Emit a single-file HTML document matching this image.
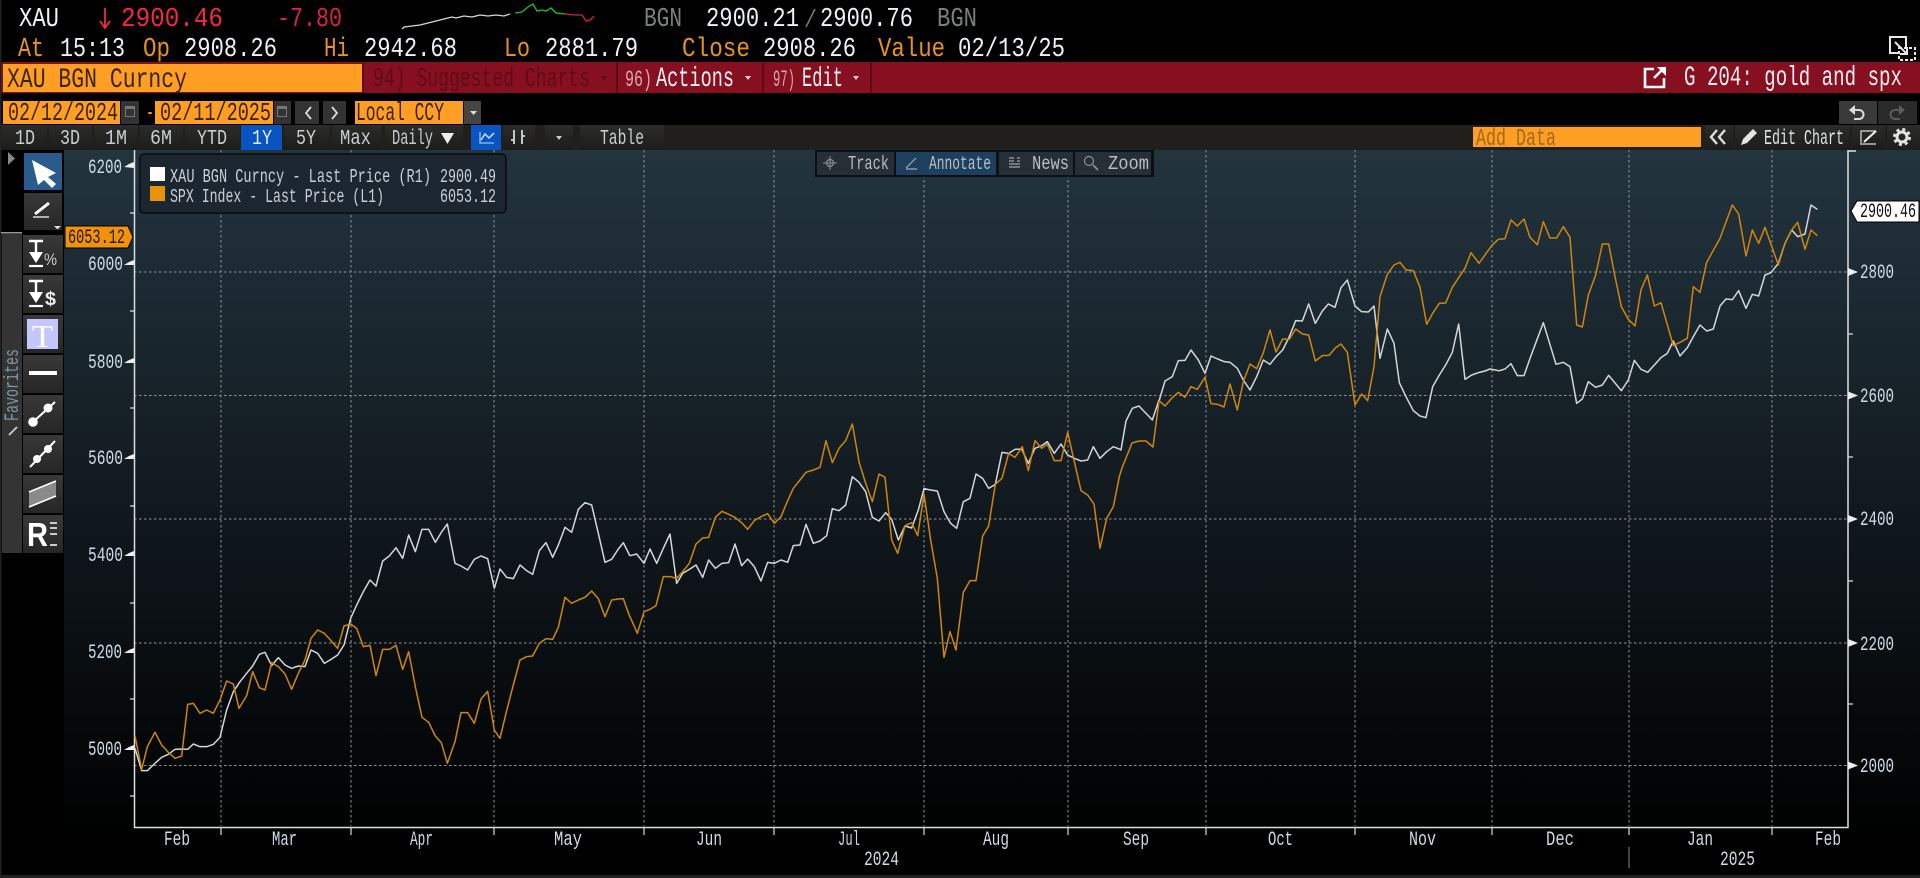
<!DOCTYPE html>
<html><head><meta charset="utf-8"><title>XAU BGN Curncy</title>
<style>
html,body{margin:0;padding:0;background:#000;width:1920px;height:878px;overflow:hidden}
svg{display:block;position:absolute;left:0;top:0;filter:blur(.3px)}
text{font-family:"Liberation Mono","DejaVu Sans Mono",monospace;white-space:pre}
.w{fill:#eef2f6}.o{fill:#e8931c}.l{fill:#cfdbe6;font-size:20px}.t{fill:#c9cdd0;font-size:21.500px}.b{fill:#b8bec4;font-size:19px}
.g{stroke:#8f9498;stroke-width:1;stroke-dasharray:2.5 2.5;fill:none}
.ws{fill:none;stroke:#d3d7da;stroke-width:4.5;stroke-linejoin:round}
.os{fill:none;stroke:#cf860c;stroke-width:4.5;stroke-linejoin:round}
</style></head><body>
<svg width="1920" height="878" viewBox="0 0 1920 878" xmlns="http://www.w3.org/2000/svg">
<defs>
<linearGradient id="bg" x1="0" y1="0" x2="0" y2="1"><stop offset="0" stop-color="#23343f"/><stop offset=".95" stop-color="#000"/><stop offset="1" stop-color="#000"/></linearGradient>
<linearGradient id="bt" x1="0" y1="0" x2="0" y2="1"><stop offset="0" stop-color="#2c2c2b"/><stop offset="1" stop-color="#1b1b1a"/></linearGradient>
<linearGradient id="tb" x1="0" y1="0" x2="0" y2="1"><stop offset="0" stop-color="#383838"/><stop offset="1" stop-color="#262626"/></linearGradient>
</defs>
<rect width="1920" height="878" fill="#000"/>

<!-- quote rows -->
<text class="w" x="19" y="26" font-size="27" textLength="40" lengthAdjust="spacingAndGlyphs">XAU</text>
<path d="M105 8V27M100 21L105 28L110 21" fill="none" stroke="#f5293f" stroke-width="1.8"/>
<text x="121" y="26" font-size="27" fill="#f5293f" textLength="102" lengthAdjust="spacingAndGlyphs">2900.46</text>
<text x="277" y="26" font-size="27" fill="#d9263a" textLength="65" lengthAdjust="spacingAndGlyphs">-7.80</text>
<polyline points="402,29 404,27 412,26 420,25 428,23 436,21 444,19 452,17 456,18 464,16 472,17 480,15 488,16 496,15 504,16 510,14" fill="none" stroke="#d8d8d8" stroke-width="1.3"/>
<polyline points="515,13 522,12 528,7 533,4 537,11 542,10 546,11 551,8 556,13 565,14" fill="none" stroke="#19c51f" stroke-width="1.3"/>
<polyline points="565,14 575,15 582,15 586,21 590,20 594,16" fill="none" stroke="#d8202c" stroke-width="1.3"/>
<text x="644" y="26" font-size="27" fill="#7c7f80" textLength="38" lengthAdjust="spacingAndGlyphs">BGN</text>
<text class="w" x="706" y="26" font-size="27" textLength="93" lengthAdjust="spacingAndGlyphs">2900.21</text>
<path d="M806 27L815 9" stroke="#777" stroke-width="1.6"/>
<text class="w" x="820" y="26" font-size="27" textLength="93" lengthAdjust="spacingAndGlyphs">2900.76</text>
<text x="937" y="26" font-size="27" fill="#7c7f80" textLength="40" lengthAdjust="spacingAndGlyphs">BGN</text>

<text class="o" x="18" y="56" font-size="27" textLength="26" lengthAdjust="spacingAndGlyphs">At</text>
<text class="w" x="60" y="56" font-size="27" textLength="65" lengthAdjust="spacingAndGlyphs">15:13</text>
<text class="o" x="143" y="56" font-size="27" textLength="27" lengthAdjust="spacingAndGlyphs">Op</text>
<text class="w" x="184" y="56" font-size="27" textLength="93" lengthAdjust="spacingAndGlyphs">2908.26</text>
<text class="o" x="324" y="56" font-size="27" textLength="25" lengthAdjust="spacingAndGlyphs">Hi</text>
<text class="w" x="364" y="56" font-size="27" textLength="93" lengthAdjust="spacingAndGlyphs">2942.68</text>
<text class="o" x="504" y="56" font-size="27" textLength="26" lengthAdjust="spacingAndGlyphs">Lo</text>
<text class="w" x="545" y="56" font-size="27" textLength="93" lengthAdjust="spacingAndGlyphs">2881.79</text>
<text class="o" x="682" y="56" font-size="27" textLength="68" lengthAdjust="spacingAndGlyphs">Close</text>
<text class="w" x="763" y="56" font-size="27" textLength="93" lengthAdjust="spacingAndGlyphs">2908.26</text>
<text class="o" x="878" y="56" font-size="27" textLength="67" lengthAdjust="spacingAndGlyphs">Value</text>
<text class="w" x="958" y="56" font-size="27" textLength="107" lengthAdjust="spacingAndGlyphs">02/13/25</text>
<!-- window icon -->
<rect x="1890" y="37" width="16" height="16" fill="none" stroke="#e8e8e8" stroke-width="2"/>
<rect x="1899" y="48" width="16" height="12" fill="#000" stroke="#e8e8e8" stroke-width="2" stroke-dasharray="3 2"/>
<path d="M1895 42L1907 54M1907 47V54H1900" fill="none" stroke="#e8e8e8" stroke-width="2"/>

<!-- red bar -->
<rect x="0" y="62" width="1920" height="31" fill="#860f20"/>
<rect x="3" y="64" width="359" height="28" fill="#ff9e24"/>
<text x="7" y="87" font-size="28" fill="#3a2400" textLength="180" lengthAdjust="spacingAndGlyphs">XAU BGN Curncy</text>
<rect x="616" y="62" width="2" height="31" fill="#5e0a16"/><rect x="762" y="62" width="2" height="31" fill="#5e0a16"/><rect x="870" y="62" width="2" height="31" fill="#5e0a16"/><rect x="362" y="62" width="2" height="31" fill="#5e0a16"/>
<text x="373" y="86" font-size="27" fill="#5f0c18" textLength="217" lengthAdjust="spacingAndGlyphs">94) Suggested Charts</text>
<path d="M601 76h6l-3 4z" fill="#5f0c18"/>
<text x="625" y="86" font-size="23" fill="#d8a8ae" textLength="27" lengthAdjust="spacingAndGlyphs">96)</text>
<text x="656" y="86" font-size="28" fill="#f6eef0" textLength="78" lengthAdjust="spacingAndGlyphs">Actions</text>
<path d="M745 76h6l-3 4z" fill="#e6d0d4"/>
<text x="773" y="86" font-size="23" fill="#d8a8ae" textLength="22" lengthAdjust="spacingAndGlyphs">97)</text>
<text x="802" y="86" font-size="28" fill="#f6eef0" textLength="41" lengthAdjust="spacingAndGlyphs">Edit</text>
<path d="M853 76h6l-3 4z" fill="#e6d0d4"/>
<path d="M1654 69H1645V87H1664V78" fill="none" stroke="#fff" stroke-width="2.6"/>
<path d="M1654 78L1662 70" stroke="#fff" stroke-width="2.6"/><path d="M1657 67H1666V76Z" fill="#fff"/>
<text x="1684" y="85" font-size="28" fill="#f6eef0" textLength="218" lengthAdjust="spacingAndGlyphs">G 204: gold and spx</text>

<!-- date row -->
<rect x="3" y="101" width="117" height="23" fill="#ff9e24"/>
<text x="8" y="120" font-size="26" fill="#3a2400" textLength="110" lengthAdjust="spacingAndGlyphs">02/12/2024</text>
<rect x="121" y="101" width="18" height="23" fill="#333"/>
<rect x="125" y="106" width="10" height="11" fill="#777"/><rect x="126" y="109" width="8" height="7" fill="#333"/>
<text class="o" x="146" y="120" font-size="26" textLength="8" lengthAdjust="spacingAndGlyphs">-</text>
<rect x="155" y="101" width="118" height="23" fill="#ff9e24"/>
<text x="160" y="120" font-size="26" fill="#3a2400" textLength="111" lengthAdjust="spacingAndGlyphs">02/11/2025</text>
<rect x="274" y="101" width="17" height="23" fill="#333"/>
<rect x="277" y="106" width="10" height="11" fill="#777"/><rect x="278" y="109" width="8" height="7" fill="#333"/>
<rect x="295" y="101" width="24" height="23" fill="#333"/><path d="M311 107L306 113L311 119" fill="none" stroke="#ddd" stroke-width="1.8"/>
<rect x="323" y="101" width="23" height="23" fill="#333"/><path d="M332 107L337 113L332 119" fill="none" stroke="#ddd" stroke-width="1.8"/>
<rect x="355" y="101" width="108" height="23" fill="#ff9e24"/>
<text x="356" y="120" font-size="26" fill="#3a2400" textLength="88" lengthAdjust="spacingAndGlyphs">Local CCY</text>
<rect x="464" y="101" width="17" height="23" fill="#444"/><path d="M470 111h7l-3.500 4z" fill="#ddd"/>
<rect x="1839" y="101" width="38" height="23" fill="#3a3a3a"/><rect x="1878" y="101" width="39" height="23" fill="#2a2a2a"/>
<path d="M1853 110h6a4.500 4.500 0 0 1 0 9h-5" fill="none" stroke="#ddd" stroke-width="2"/><path d="M1849 110l6-5v10z" fill="#ddd"/>
<path d="M1901 110h-6a4.500 4.500 0 0 0 0 9h5" fill="none" stroke="#5c5c5c" stroke-width="2"/><path d="M1905 110l-6-5v10z" fill="#5c5c5c"/>

<!-- toolbar -->
<rect x="0" y="125" width="1920" height="25" fill="#201f1b"/>
<g fill="url(#bt)"><rect x="1" y="125" width="46" height="25"/><rect x="49" y="125" width="43" height="25"/><rect x="94" y="125" width="44" height="25"/><rect x="140" y="125" width="43" height="25"/><rect x="185" y="125" width="55" height="25"/><rect x="284" y="125" width="46" height="25"/><rect x="332" y="125" width="50" height="25"/><rect x="385" y="125" width="78" height="25"/><rect x="503" y="125" width="32" height="25"/><rect x="545" y="125" width="28" height="25"/><rect x="580" y="125" width="84" height="25"/><rect x="1705" y="125" width="28" height="25"/><rect x="1735" y="125" width="115" height="25"/><rect x="1852" y="125" width="33" height="25"/><rect x="1887" y="125" width="33" height="25"/></g>
<rect x="241" y="125" width="41" height="25" fill="#0a54c2"/>
<rect x="471" y="125" width="30" height="25" fill="#0a54c2"/>
<text class="t" x="15" y="144" textLength="20" lengthAdjust="spacingAndGlyphs">1D</text>
<text class="t" x="60" y="144" textLength="20" lengthAdjust="spacingAndGlyphs">3D</text>
<text class="t" x="105" y="144" textLength="22" lengthAdjust="spacingAndGlyphs">1M</text>
<text class="t" x="150" y="144" textLength="22" lengthAdjust="spacingAndGlyphs">6M</text>
<text class="t" x="197" y="144" textLength="30" lengthAdjust="spacingAndGlyphs">YTD</text>
<text class="t" x="252" y="144" textLength="20" lengthAdjust="spacingAndGlyphs" style="fill:#e6ecf5">1Y</text>
<text class="t" x="296" y="144" textLength="20" lengthAdjust="spacingAndGlyphs">5Y</text>
<text class="t" x="340" y="144" textLength="31" lengthAdjust="spacingAndGlyphs">Max</text>
<text class="t" x="392" y="144" textLength="41" lengthAdjust="spacingAndGlyphs">Daily</text>
<path d="M441 133H454L447.500 144Z" fill="#eee"/>
<path d="M480 132V143H494" fill="none" stroke="#9cc2ee" stroke-width="1.3"/><path d="M481 140L485 134L489 138L494 133" fill="none" stroke="#cfe2f8" stroke-width="1.5"/>
<path d="M514 130V144M511 140H514M522 130V144M522 136H525" stroke="#c2c6c8" stroke-width="2" fill="none"/>
<path d="M556 136h6l-3 4z" fill="#ccc"/>
<text class="t" x="600" y="144" textLength="44" lengthAdjust="spacingAndGlyphs">Table</text>
<rect x="1473" y="127" width="228" height="20" fill="#ff9e24"/>
<text x="1476" y="145" font-size="24" fill="#a06a1a" textLength="80" lengthAdjust="spacingAndGlyphs">Add Data</text>
<path d="M1717 130L1711 137L1717 144M1725 130L1719 137L1725 144" fill="none" stroke="#ddd" stroke-width="2.4"/>
<path d="M1741 145L1743 139L1753 129L1757 133L1747 143Z" fill="#e4e4e4"/>
<text class="t" x="1764" y="144" textLength="80" lengthAdjust="spacingAndGlyphs" style="fill:#dfe3e6">Edit Chart</text>
<path d="M1876 131H1861V145M1862 144H1876" fill="none" stroke="#bbb" stroke-width="1.5"/><path d="M1864 142L1876 131" stroke="#eee" stroke-width="2.2"/>
<circle cx="1902" cy="137" r="5" fill="none" stroke="#e4e4e4" stroke-width="3"/><circle cx="1902" cy="137" r="7.500" fill="none" stroke="#e4e4e4" stroke-width="3" stroke-dasharray="3 2.900"/>

<!-- chart area -->
<rect x="64" y="150" width="1856" height="725" fill="url(#bg)"/>
<rect x="0" y="875" width="1920" height="3" fill="#222"/>
<rect x="0" y="0" width="1.500" height="878" fill="#222"/>

<g class="g">
<path d="M221 150V826M351 150V826M494 150V826M644 150V826M774 150V826M924 150V826M1068 150V826M1206 150V826M1355 150V826M1492 150V826M1629 150V826M1772 150V826"/>
<path d="M134 272H1848M134 395.500H1848M134 519H1848M134 643H1848M134 765.500H1848"/>
</g>

<!-- axes -->
<path d="M134.500 150V827.500H1848V150" fill="none" stroke="#dcdfe2" stroke-width="1.500"/>
<path d="M1848 151H1856" stroke="#dcdfe2" stroke-width="1.500"/>
<path d="M221 827v8M351 827v8M494 827v8M644 827v8M774 827v8M924 827v8M1068 827v8M1206 827v8M1355 827v8M1492 827v8M1629 827v8M1772 827v8" stroke="#ddd" stroke-width="1.200"/>
<path d="M134 166l-10-1 5-3 5-2zM134 263l-10 0 5-3 5-2v8zM134 361l-10 0 5-3 5-2v8zM134 457l-10 0 5-3 5-2v8zM134 554l-10 0 5-3 5-2v8zM134 651l-10 0 5-3 5-2v8zM134 748l-10 0 5-3 5-2v8z" fill="#eee" transform="translate(0,2)"/>
<path d="M130 213h4M130 311h4M130 408h4M130 506h4M130 603h4M130 699h4M130 796h4" stroke="#ddd" stroke-width="1.200"/>
<path d="M1848 268l10 4-10 4zM1848 391.500l10 4-10 4zM1848 515l10 4-10 4zM1848 639l10 4-10 4zM1848 761.500l10 4-10 4z" fill="#eee"/>
<path d="M1848 334h5M1848 457h5M1848 581h5M1848 704h5" stroke="#ddd" stroke-width="1.200"/>

<!-- lines -->
<g transform="translate(130,500) scale(.33333)">
<polyline class="ws" points="15,745 35,812 52,812 75,790 95,772 115,763 135,748 155,747 173,748 190,732 210,740 230,740 250,733 270,712 290,630 310,575 330,545 350,520 368,498 388,463 405,457 425,497 445,473 465,495 485,505 505,498 525,500 543,450 563,460 583,490 603,478 623,465 642,435 662,355 680,315 700,275 720,240 738,258 758,183 778,168 798,143 818,175 836,105 856,155 876,88 896,88 916,127 934,97 952,72 975,190 993,198 1013,210 1033,178 1053,168 1073,176 1093,265 1110,207 1130,232 1150,236 1170,195 1190,212 1208,223 1228,152 1248,128 1268,172 1285,135 1305,82 1325,97 1345,28 1365,8 1385,15 1405,100 1425,187 1445,178 1465,147 1480,128 1500,168"/>
</g>
<g transform="translate(620,400) scale(.33333)">
<polyline class="ws" points="30,467 50,462 72,490 90,447 110,490 130,445 150,402 170,550 188,520 208,508 228,495 248,532 266,480 286,505 306,490 326,488 345,432 365,497 383,477 403,500 423,543 443,487 463,490 483,480 503,487 520,437 540,435 558,373 580,430 600,423 620,407 637,326 657,332 677,315 697,230 717,247 737,275 757,352 777,363 797,338 815,358 835,420 855,378 875,384 895,330 912,266 932,270 952,273 972,335 992,370 1010,385 1030,305 1050,295 1068,222 1088,235 1106,265 1126,253 1146,157 1166,160 1185,148 1205,147 1225,190 1245,145 1265,137 1282,125 1303,160 1323,132 1343,165 1363,175 1383,183 1403,180 1420,140 1440,175 1460,155 1480,140 1500,148 1503,150 1518,63 1537,25 1557,18 1597,60 1617,0"/>
</g>
<g transform="translate(1100,180) scale(.33333)">
<polyline class="ws" points="178,660 195,603 217,590 235,542 255,541 273,510 295,540 315,580 333,528 353,537 373,545 390,547 412,565 430,600 450,630 470,590 490,540 510,553 528,530 548,510 568,470 587,422 607,423 626,372 646,430 667,393 685,372 705,382 723,323 742,300 765,378 785,395 805,396 822,378 840,535 862,447 882,490 898,608 918,650 940,692 960,708 978,713 998,620 1018,585 1037,555 1057,517 1076,432 1095,598 1115,585 1135,578 1155,573 1170,567 1195,572"/>
</g>
<g transform="translate(1480,180) scale(.33333)">
<polyline class="ws" points="55,573 75,567 93,551 112,587 132,587 152,530 190,428 228,553 250,547 270,560 290,670 307,657 325,605 347,622 367,615 386,586 424,632 445,600 463,541 483,568 503,577 523,555 543,533 562,520 580,483 600,528 622,503 640,470 660,435 680,453 700,447 720,378 738,357 757,359 776,332 798,385 817,343 836,348 855,285 873,278 895,250 915,190 935,150 953,170 975,162 993,75 1012,88"/>
</g>
<g transform="translate(130,500) scale(.33333)">
<polyline class="os" points="15,708 35,808 52,740 75,697 95,735 115,757 135,775 155,768 173,613 190,610 210,640 230,630 250,640 270,600 290,543 310,552 327,625 350,587 368,515 388,563 405,570 425,488 445,500 465,522 485,568 505,520 525,480 543,415 563,390 583,400 603,422 623,445 642,378 662,372 680,385 700,440 720,436 738,527 758,448 778,448 798,436 818,508 836,455 856,560 876,652 896,667 916,708 934,728 952,790 975,725 993,638 1013,638 1033,670 1053,597 1073,574 1093,690 1110,715 1130,632 1150,555 1170,480 1190,470 1208,468 1228,430 1248,416 1268,418 1285,382 1305,292 1325,310 1345,300 1365,292 1385,273 1405,296 1425,350 1445,300 1465,297 1480,296 1500,352"/>
</g>
<g transform="translate(620,400) scale(.33333)">
<polyline class="os" points="30,650 52,700 72,635 90,628 108,617 130,530 150,530 170,535 188,515 208,490 228,432 248,414 266,412 286,352 306,334 326,343 345,352 365,368 383,388 403,362 423,350 443,341 463,370 483,350 503,302 520,265 540,240 558,217 580,210 600,202 618,122 637,188 657,145 677,122 697,72 717,185 737,250 757,305 777,222 795,232 815,420 833,460 855,377 875,368 893,407 912,282 932,420 952,535 972,772 990,695 1008,750 1030,577 1050,542 1068,542 1088,408 1106,378 1126,253 1146,235 1166,160 1185,172 1207,140 1225,212 1245,122 1265,145 1282,132 1303,182 1323,182 1343,97 1363,185 1383,272 1403,285 1422,312 1440,445 1460,355 1480,320 1498,230 1506,204 1536,129 1557,123 1578,123 1599,141 1617,3"/>
</g>
<g transform="translate(1100,180) scale(.33333)">
<polyline class="os" points="178,663 195,678 215,655 235,637 255,652 273,620 292,628 315,592 333,671 353,673 372,681 390,612 412,690 430,605 450,552 470,566 490,518 510,450 528,516 548,477 568,478 587,447 607,462 626,465 646,543 667,527 687,526 707,503 723,492 742,517 765,675 785,642 803,662 822,560 840,350 862,283 882,255 900,247 918,270 940,272 960,322 980,433 998,400 1018,370 1037,369 1057,322 1076,293 1095,265 1113,218 1137,250 1155,225 1175,197 1195,178"/>
</g>
<g transform="translate(1480,180) scale(.33333)">
<polyline class="os" points="55,178 75,176 93,120 112,138 132,117 150,172 172,194 190,125 210,174 230,174 250,140 270,172 290,435 307,441 325,345 347,285 367,192 386,192 405,290 424,380 445,418 465,438 483,330 502,285 523,378 543,368 580,497 600,487 622,475 640,320 660,337 680,247 720,175 757,75 776,102 798,228 817,150 836,190 855,142 895,255 915,190 935,150 953,127 975,208 993,150 1012,167"/>
</g>

<!-- axis labels -->
<text class="l" x="88" y="173" textLength="34" lengthAdjust="spacingAndGlyphs">6200</text>
<text class="l" x="88" y="270" textLength="35" lengthAdjust="spacingAndGlyphs">6000</text>
<text class="l" x="88" y="368" textLength="35" lengthAdjust="spacingAndGlyphs">5800</text>
<text class="l" x="88" y="464" textLength="35" lengthAdjust="spacingAndGlyphs">5600</text>
<text class="l" x="88" y="561" textLength="35" lengthAdjust="spacingAndGlyphs">5400</text>
<text class="l" x="88" y="658" textLength="34" lengthAdjust="spacingAndGlyphs">5200</text>
<text class="l" x="88" y="755" textLength="34" lengthAdjust="spacingAndGlyphs">5000</text>
<text class="l" x="1860" y="278" textLength="34" lengthAdjust="spacingAndGlyphs">2800</text>
<text class="l" x="1860" y="402" textLength="34" lengthAdjust="spacingAndGlyphs">2600</text>
<text class="l" x="1860" y="525" textLength="34" lengthAdjust="spacingAndGlyphs">2400</text>
<text class="l" x="1860" y="650" textLength="34" lengthAdjust="spacingAndGlyphs">2200</text>
<text class="l" x="1860" y="772" textLength="34" lengthAdjust="spacingAndGlyphs">2000</text>
<text class="l" x="164" y="845" textLength="26" lengthAdjust="spacingAndGlyphs">Feb</text>
<text class="l" x="272" y="845" textLength="25" lengthAdjust="spacingAndGlyphs">Mar</text>
<text class="l" x="410" y="845" textLength="23" lengthAdjust="spacingAndGlyphs">Apr</text>
<text class="l" x="554" y="845" textLength="28" lengthAdjust="spacingAndGlyphs">May</text>
<text class="l" x="696" y="845" textLength="26" lengthAdjust="spacingAndGlyphs">Jun</text>
<text class="l" x="838" y="845" textLength="22" lengthAdjust="spacingAndGlyphs">Jul</text>
<text class="l" x="983" y="845" textLength="26" lengthAdjust="spacingAndGlyphs">Aug</text>
<text class="l" x="1123" y="845" textLength="26" lengthAdjust="spacingAndGlyphs">Sep</text>
<text class="l" x="1268" y="845" textLength="25" lengthAdjust="spacingAndGlyphs">Oct</text>
<text class="l" x="1409" y="845" textLength="27" lengthAdjust="spacingAndGlyphs">Nov</text>
<text class="l" x="1546" y="845" textLength="28" lengthAdjust="spacingAndGlyphs">Dec</text>
<text class="l" x="1687" y="845" textLength="26" lengthAdjust="spacingAndGlyphs">Jan</text>
<text class="l" x="1815" y="845" textLength="26" lengthAdjust="spacingAndGlyphs">Feb</text>
<text class="l" x="864" y="865" textLength="35" lengthAdjust="spacingAndGlyphs">2024</text>
<text class="l" x="1720" y="865" textLength="35" lengthAdjust="spacingAndGlyphs">2025</text>
<path d="M1629 847V868" stroke="#888" stroke-width="1"/>

<!-- price flags -->
<path d="M65 226H128L133 237L128 248H65Z" fill="#f0920a" stroke="#000" stroke-width="1"/>
<text x="68" y="243" font-size="20" fill="#2a1800" textLength="57" lengthAdjust="spacingAndGlyphs">6053.12</text>
<path d="M1851 211L1857 201H1919V222H1857Z" fill="#fff" stroke="#000" stroke-width="1"/>
<text x="1860" y="217" font-size="20" fill="#111" textLength="56" lengthAdjust="spacingAndGlyphs">2900.46</text>

<!-- legend -->
<rect x="140" y="154" width="366" height="59" rx="4" fill="#1c2630" stroke="#090c0f" stroke-width="1.500"/>
<rect x="150" y="167" width="15" height="14" fill="#fff"/>
<rect x="150" y="186" width="15" height="15" fill="#e8920a"/>
<text x="170" y="182" font-size="19" fill="#c9d0d6" textLength="261" lengthAdjust="spacingAndGlyphs">XAU BGN Curncy - Last Price (R1)</text>
<text x="440" y="182" font-size="19" fill="#c9d0d6" textLength="56" lengthAdjust="spacingAndGlyphs">2900.49</text>
<text x="170" y="202" font-size="19" fill="#c9d0d6" textLength="214" lengthAdjust="spacingAndGlyphs">SPX Index - Last Price (L1)</text>
<text x="440" y="202" font-size="19" fill="#c9d0d6" textLength="56" lengthAdjust="spacingAndGlyphs">6053.12</text>

<!-- floating toolbar -->
<rect x="815" y="150" width="339" height="27" fill="#0b1014"/>
<rect x="817" y="152" width="77" height="23" fill="#262f38"/>
<rect x="896" y="152" width="100" height="23" fill="#1e3f5e"/>
<rect x="999" y="152" width="74" height="23" fill="#262f38"/>
<rect x="1075" y="152" width="76" height="23" fill="#262f38"/>
<circle cx="830" cy="163" r="3.500" fill="none" stroke="#8b9095" stroke-width="1.200"/><path d="M830 156V170M823 163H837" stroke="#8b9095" stroke-width="1"/>
<path d="M906 168L916 158M906 169H917" stroke="#8b9aa8" stroke-width="1.400" fill="none"/>
<path d="M1009 158H1014M1017 158H1020M1009 161H1014M1017 161H1020M1009 164H1020M1009 167H1020" stroke="#8b9095" stroke-width="1.600" fill="none"/>
<circle cx="1089" cy="161" r="4.500" fill="none" stroke="#8b9095" stroke-width="1.200"/><path d="M1093 165L1098 170" stroke="#8b9095" stroke-width="1.800"/>
<text class="b" x="848" y="169" textLength="41" lengthAdjust="spacingAndGlyphs">Track</text>
<text class="b" x="929" y="169" textLength="62" lengthAdjust="spacingAndGlyphs">Annotate</text>
<text class="b" x="1032" y="169" textLength="37" lengthAdjust="spacingAndGlyphs">News</text>
<text class="b" x="1108" y="169" textLength="41" lengthAdjust="spacingAndGlyphs">Zoom</text>

<!-- left tool column -->
<rect x="0" y="150" width="64" height="725" fill="#000"/>
<rect x="0" y="0" width="1.500" height="878" fill="#222"/>
<path d="M8 152L15 158.500L8 165Z" fill="#888"/>
<rect x="24" y="153" width="38" height="37" fill="#2b5a8c"/>
<path d="M32 160L56 173L48 177L56 184L52 188L44 180L38 185Z" fill="#fff"/>
<g fill="url(#tb)"><rect x="24" y="193" width="38" height="37"/><rect x="23" y="235" width="40" height="38"/><rect x="23" y="275" width="40" height="38"/><rect x="23" y="315" width="40" height="38"/><rect x="23" y="355" width="40" height="38"/><rect x="23" y="395" width="40" height="38"/><rect x="23" y="435" width="40" height="38"/><rect x="23" y="475" width="40" height="38"/><rect x="23" y="515" width="40" height="38"/></g>
<path d="M35 214L49 203" stroke="#fff" stroke-width="3"/><path d="M33 217H49" stroke="#ddd" stroke-width="1.500"/>
<path d="M54 226h7l-3.500 3.500z" fill="#ddd"/>
<rect x="1" y="232" width="21" height="1.500" fill="#9a9a9a"/>
<rect x="2" y="234" width="20" height="319" fill="#343434"/>
<text transform="translate(18,421) rotate(-90)" font-size="20" fill="#7f96a6" textLength="72" lengthAdjust="spacingAndGlyphs">Favorites</text>
<path d="M9 435L17 427" stroke="#cfcfcf" stroke-width="1.800"/>
<!-- % -->
<path d="M29 241H43M36 241V253" stroke="#fff" stroke-width="2.400"/><path d="M29 252H43L36 263Z" fill="#fff"/><path d="M29 266H43" stroke="#fff" stroke-width="2.200"/>
<text x="44" y="265" font-size="17" fill="#ccc" style="font-family:'Liberation Sans',sans-serif" textLength="13" lengthAdjust="spacingAndGlyphs">%</text>
<!-- $ -->
<path d="M29 281H43M36 281V293" stroke="#fff" stroke-width="2.400"/><path d="M29 292H43L36 303Z" fill="#fff"/><path d="M29 306H43" stroke="#fff" stroke-width="2.200"/>
<text x="45" y="305" font-size="19" font-weight="700" fill="#eee" style="font-family:'Liberation Sans',sans-serif" textLength="11" lengthAdjust="spacingAndGlyphs">$</text>
<!-- T -->
<rect x="27" y="319" width="31" height="30" fill="#c6c6ff"/>
<text x="32" y="347" font-size="32" fill="#fff" style="font-family:'Liberation Serif',serif" textLength="21" lengthAdjust="spacingAndGlyphs">T</text>
<!-- line -->
<rect x="29" y="371" width="28" height="4" fill="#fff"/>
<path d="M33 422L55 402" stroke="#fff" stroke-width="2"/><circle cx="33" cy="422" r="4.800" fill="#fff"/><circle cx="48" cy="408" r="4.500" fill="#fff"/>
<path d="M30 467L55 441" stroke="#fff" stroke-width="2"/><circle cx="37" cy="459" r="4" fill="#fff"/><circle cx="48" cy="449" r="4" fill="#fff"/>
<path d="M29 492L56 481V496L29 507Z" fill="#8a8a8a"/><path d="M29 492L56 481M29 507L56 496" stroke="#fff" stroke-width="1.600"/>
<text x="27" y="546" font-size="33" font-weight="700" fill="#fff" style="font-family:'Liberation Sans',sans-serif" textLength="21" lengthAdjust="spacingAndGlyphs">R</text>
<path d="M50 523H57M50 528H57M50 534H57M50 545H57" stroke="#fff" stroke-width="1.600"/>
</svg>
</body></html>
